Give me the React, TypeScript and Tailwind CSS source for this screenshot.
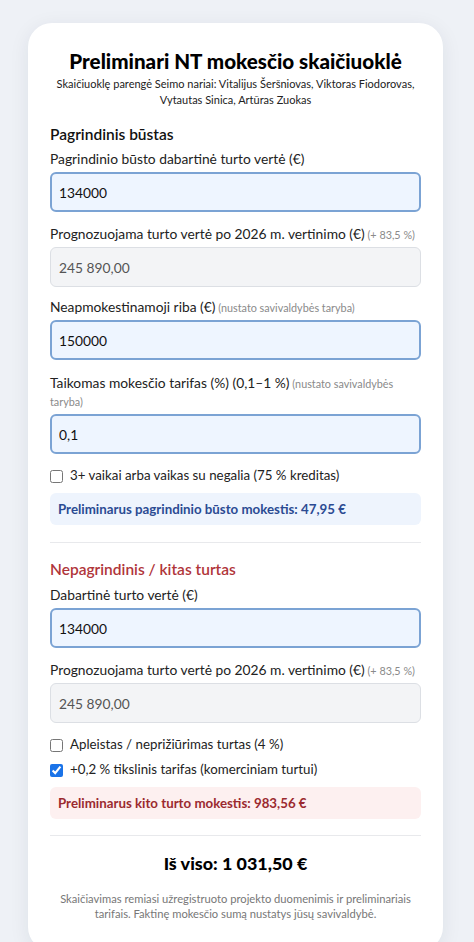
import React from 'react'

const font = { fontFamily: 'Lato, "Noto Sans", sans-serif' }

const activeInput =
  'mt-[4px] block h-[40px] w-full rounded-[6px] border-2 border-[#7ba3d4] bg-[#eef5ff] px-[7px] text-[13.8px] text-[#111] outline-none'
const readInput =
  'mt-[4px] block h-[40px] w-full rounded-[6px] border border-[#dcdfe4] bg-[#f3f4f6] px-[8px] text-[13.8px] text-[#555] outline-none'

function Label({ text, note }: { text: string; note?: string }) {
  return (
    <div className="text-[13.8px] leading-[18px] text-[#222]">
      {text}
      {note && <span className="text-[10.8px] leading-none text-[#8a8a8a]"> {note}</span>}
    </div>
  )
}

function Field({ label, note, value, readOnly, gap = 'mt-[13px]' }: { label: string; note?: string; value: string; readOnly?: boolean; gap?: string }) {
  return (
    <div className={gap}>
      <Label text={label} note={note} />
      <input readOnly value={value} className={readOnly ? readInput : activeInput} />
    </div>
  )
}

function Check({ label, checked }: { label: string; checked?: boolean }) {
  return (
    <label className="flex h-[18px] items-center gap-[7px] text-[13.3px] text-[#222]">
      <input type="checkbox" defaultChecked={checked} className="m-0 h-[13px] w-[13px] accent-[#1a73e8]" />
      {label}
    </label>
  )
}

export default function App() {
  return (
    <div className="min-h-[942px] overflow-hidden bg-[#eef1f6] pt-[23px]" style={font}>
      <div className="ml-[28px] w-[415px] rounded-[24px] bg-white px-[22px] pb-[30px] pt-[25px] shadow-[0_4px_20px_rgba(30,40,70,0.08)]">
        <h1 className="text-center text-[20.6px] font-black leading-[26px] text-black">Preliminari NT mokesčio skaičiuoklė</h1>
        <p className="mt-[2px] text-center text-[11px] leading-[16px] text-[#222]">
          Skaičiuoklę parengė Seimo nariai: Vitalijus Šeršniovas, Viktoras Fiodorovas, Vytautas Sinica, Artūras Zuokas
        </p>

        <h2 className="mt-[15px] text-[15.5px] font-semibold leading-[22px] text-[#111]">Pagrindinis būstas</h2>
        <Field gap="mt-[5px]" label="Pagrindinio būsto dabartinė turto vertė (€)" value="134000" />
        <Field label="Prognozuojama turto vertė po 2026 m. vertinimo (€)" note="(+ 83,5 %)" value="245 890,00" readOnly />
        <Field gap="mt-[11px]" label="Neapmokestinamoji riba (€)" note="(nustato savivaldybės taryba)" value="150000" />
        <Field gap="mt-[14px]" label="Taikomas mokesčio tarifas (%) (0,1–1 %)" note="(nustato savivaldybės taryba)" value="0,1" />
        <div className="mt-[13px]">
          <Check label="3+ vaikai arba vaikas su negalia (75 % kreditas)" />
        </div>
        <div className="mt-[8px] rounded-[6px] bg-[#eef4fd] px-[8px] py-[7px] text-[13.3px] font-bold leading-[18px] text-[#2b4b93]">
          Preliminarus pagrindinio būsto mokestis: 47,95 €
        </div>

        <hr className="mt-[17px] border-[#e8e9ec]" />

        <h2 className="mt-[15px] text-[15.5px] font-semibold leading-[22px] text-[#b0353a]">Nepagrindinis / kitas turtas</h2>
        <Field gap="mt-[6px]" label="Dabartinė turto vertė (€)" value="134000" />
        <Field label="Prognozuojama turto vertė po 2026 m. vertinimo (€)" note="(+ 83,5 %)" value="245 890,00" readOnly />
        <div className="mt-[13px] flex flex-col gap-[7px]">
          <Check label="Apleistas / neprižiūrimas turtas (4 %)" />
          <Check label="+0,2 % tikslinis tarifas (komerciniam turtui)" checked />
        </div>
        <div className="mt-[8px] rounded-[6px] bg-[#fdf0f0] px-[8px] py-[7px] text-[13.3px] font-bold leading-[18px] text-[#9b2a2f]">
          Preliminarus kito turto mokestis: 983,56 €
        </div>

        <hr className="mt-[16px] border-[#e8e9ec]" />

        <div className="mt-[15px] text-center text-[17.9px] font-black leading-[24px] text-black">Iš viso: 1 031,50 €</div>
        <p className="mt-[16px] text-center text-[11.2px] leading-[15px] text-[#777]">
          Skaičiavimas remiasi užregistruoto projekto duomenimis ir preliminariais tarifais. Faktinę mokesčio sumą nustatys jūsų savivaldybė.
        </p>
      </div>
    </div>
  )
}
